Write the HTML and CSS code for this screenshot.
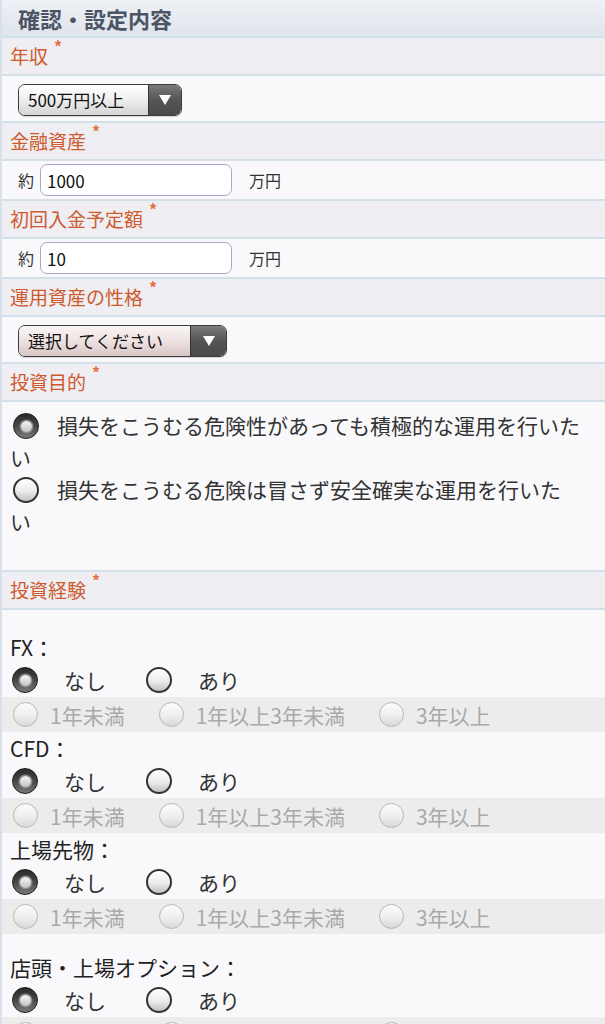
FILE: index.html
```
<!DOCTYPE html>
<html lang="ja">
<head>
<meta charset="utf-8">
<link rel="stylesheet" href="styles.css">
</head>
<body>
<div class="page">
  <div class="hdr">確認・設定内容</div>

  <div class="lbl">年収<span class="req">*</span></div>
  <div class="selrow">
    <div class="select s1"><span class="val">500万円以上</span><span class="btn"><i class="tri"></i></span></div>
  </div>

  <div class="lbl">金融資産<span class="req">*</span></div>
  <div class="inprow">
    <span class="pre">約</span><input class="inp" type="text" value="1000"><span class="unit">万円</span>
  </div>

  <div class="lbl">初回入金予定額<span class="req">*</span></div>
  <div class="inprow">
    <span class="pre">約</span><input class="inp" type="text" value="10"><span class="unit">万円</span>
  </div>

  <div class="lbl">運用資産の性格<span class="req">*</span></div>
  <div class="selrow">
    <div class="select s2"><span class="val">選択してください</span><span class="btn"><i class="tri"></i></span></div>
  </div>

  <div class="lbl">投資目的<span class="req">*</span></div>
  <div class="purpose">
    <div class="pline"><span class="radio on big"></span>損失をこうむる危険性があっても積極的な運用を行いた<br>い</div>
    <div class="pline"><span class="radio big"></span>損失をこうむる危険は冒さず安全確実な運用を行いた<br>い</div>
  </div>

  <div class="lbl">投資経験<span class="req">*</span></div>
  <div class="exp">
    <div class="q">FX：</div>
    <div class="ans"><span class="radio on"></span><span class="t">なし</span><span class="radio r2"></span><span class="t">あり</span></div>
    <div class="dis"><span class="radio off"></span><span class="t">1年未満</span><span class="radio off d2"></span><span class="t">1年以上3年未満</span><span class="radio off d2"></span><span class="t">3年以上</span></div>

    <div class="q">CFD：</div>
    <div class="ans"><span class="radio on"></span><span class="t">なし</span><span class="radio r2"></span><span class="t">あり</span></div>
    <div class="dis"><span class="radio off"></span><span class="t">1年未満</span><span class="radio off d2"></span><span class="t">1年以上3年未満</span><span class="radio off d2"></span><span class="t">3年以上</span></div>

    <div class="q">上場先物：</div>
    <div class="ans"><span class="radio on"></span><span class="t">なし</span><span class="radio r2"></span><span class="t">あり</span></div>
    <div class="dis"><span class="radio off"></span><span class="t">1年未満</span><span class="radio off d2"></span><span class="t">1年以上3年未満</span><span class="radio off d2"></span><span class="t">3年以上</span></div>

    <div class="q gap">店頭・上場オプション：</div>
    <div class="ans"><span class="radio on"></span><span class="t">なし</span><span class="radio r2"></span><span class="t">あり</span></div>
    <div class="dis"><span class="radio off"></span><span class="t">1年未満</span><span class="radio off d2"></span><span class="t">1年以上3年未満</span><span class="radio off d2"></span><span class="t">3年以上</span></div>
  </div>
</div>
</body>
</html>
```

FILE: styles.css
```
* { box-sizing: border-box; }
body {
  margin: 0;
  background: #f9f9fb;
  font-family: "Noto Sans CJK JP", "Noto Sans", sans-serif;
  color: #222;
}
.page {
  border-left: 2px solid #d6e1eb;
  min-height: 1024px;
}
.hdr {
  height: 38px;
  line-height: 36px;
  padding-left: 16px;
  font-size: 22px;
  font-weight: bold;
  color: #4b5566;
  background: linear-gradient(#eef1f5, #dfe5ec);
  border-bottom: 2px solid #d3dfe9;
}
.lbl {
  height: 38px;
  line-height: 36px;
  padding-left: 8px;
  font-size: 19px;
  color: #cf5a2e;
  background: #eeeef3;
  border-bottom: 2px solid #d3dfe9;
}
.req {
  display: inline-block;
  margin-left: 6px;
  font-size: 16px;
  font-weight: bold;
  line-height: 1;
  color: #e5703f;
  vertical-align: 11px;
}
.selrow {
  height: 47px;
  padding: 8px 0 0 16px;
  border-bottom: 2px solid #d3dfe9;
}
.select {
  display: flex;
  height: 32px;
  border: 1.5px solid #3c3c3c;
  border-radius: 7px;
  overflow: hidden;
  box-shadow: 0 1px 1px rgba(0,0,0,0.15);
}
.s1 { width: 164px; }
.s2 { width: 209px; }
.select .val {
  flex: 1;
  padding-left: 9px;
  font-size: 17px;
  line-height: 29px;
  color: #111;
  background: linear-gradient(#ffffff, #f0f0f0 45%, #d4d4d4);
}
.s2 .val {
  background: linear-gradient(#faf4f4, #efe4e4 45%, #d8c6c6);
}
.select .btn {
  width: 33px;
  border-left: 1px solid #333;
  background: linear-gradient(#7a7a7a, #555 50%, #4a4a4a);
  display: flex;
  align-items: center;
  justify-content: center;
}
.s2 .btn { width: 36px; }
.tri {
  width: 0;
  height: 0;
  border-left: 6px solid transparent;
  border-right: 6px solid transparent;
  border-top: 10px solid #fff;
}
.inprow {
  height: 40px;
  display: flex;
  align-items: center;
  padding-left: 16px;
  border-bottom: 2px solid #d3dfe9;
  font-size: 16px;
  color: #333;
}
.pre { width: 22px; }
.inp {
  width: 192px;
  height: 32px;
  border: 1.5px solid #aaa6cc;
  border-radius: 7px;
  background: #fff;
  padding: 0 0 0 6px;
  margin: 0;
  font-family: "Noto Sans CJK JP", "Noto Sans", sans-serif;
  font-size: 17px;
  color: #111;
  outline: none;
}
.unit { margin-left: 17px; }

.purpose {
  height: 170px;
  padding: 7px 10px 0 8px;
  border-bottom: 2px solid #d3dfe9;
  font-size: 21px;
  line-height: 32px;
  color: #333;
}
.radio {
  display: inline-block;
  width: 26px;
  height: 26px;
  border-radius: 50%;
  border: 2px solid #333;
  background: linear-gradient(#ffffff, #ececec 55%, #c0c0c0);
  position: relative;
  flex: none;
}
.radio.on {
  border: 1px solid #1a1a1a;
  background: linear-gradient(#2a2a2a, #474747 50%, #7a7a7a);
}
.radio.on::after {
  content: "";
  position: absolute;
  left: 50%;
  top: 50%;
  width: 11px;
  height: 11px;
  margin: -5.5px 0 0 -5.5px;
  border-radius: 50%;
  background: linear-gradient(#f6f6f6, #c4c4c4);
  box-shadow: 0 0 0 1.5px #8a8a8a;
}
.radio.big {
  vertical-align: -5px;
  margin: 0 18px 0 3px;
}
.exp { padding-top: 21px; }
.q {
  height: 32px;
  line-height: 32px;
  padding-left: 8px;
  font-size: 21px;
  color: #222;
}
.q.gap { margin-top: 17px; }
.ans {
  height: 34px;
  display: flex;
  align-items: center;
  padding-left: 10px;
  font-size: 21px;
  color: #333;
}
.ans .t { margin-left: 26px; }
.ans .r2 { margin-left: 40px; }
.dis {
  height: 35px;
  display: flex;
  align-items: center;
  padding-left: 11px;
  background: #ececec;
  font-size: 21px;
  color: #a9a9a9;
}
.radio.off {
  width: 25px;
  height: 25px;
  border: 1.5px solid #b8b8b8;
  background: linear-gradient(#fcfcfc, #eeeeee 55%, #d8d8d8);
}
.dis .t { margin-left: 12px; }
.dis .d2 { margin-left: 34px; }
```
